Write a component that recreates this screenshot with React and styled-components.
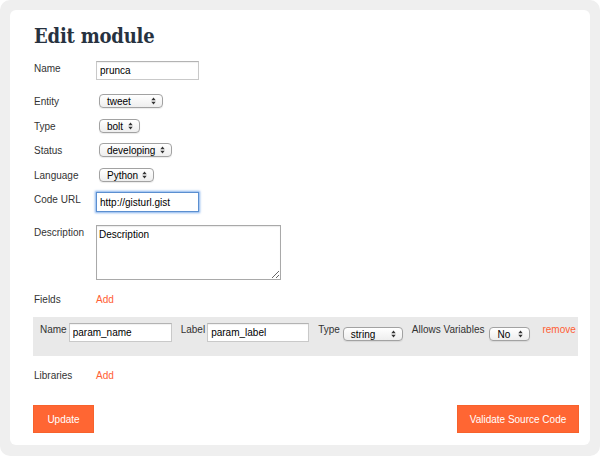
import React from "react";
import styled, { createGlobalStyle } from "styled-components";

const GlobalStyle = createGlobalStyle`
  html, body {
    margin: 0;
    padding: 0;
    background: #ffffff;
  }
  body {
    font-family: "Liberation Sans", Arial, sans-serif;
    font-size: 10px;
    color: #333;
  }
`;

const Frame = styled.div`
  width: 600px;
  height: 456px;
  box-sizing: border-box;
  padding: 10px;
  background: #efefef;
  border-radius: 10px;
`;

const Card = styled.div`
  height: 435px;
  box-sizing: border-box;
  padding: 13px 11px 0 23px;
  background: #fff;
  border-radius: 6px;
  display: flex;
  flex-direction: column;
`;

const Title = styled.h1`
  margin: 0 0 12px 1px;
  font-family: "DejaVu Serif Condensed", "DejaVu Serif", Georgia, serif;
  font-weight: bold;
  font-size: 20px;
  line-height: 26px;
  letter-spacing: -0.2px;
  color: #27323f;
`;

const Row = styled.div`
  display: flex;
  align-items: flex-start;
  height: ${(p) => p.$h}px;
  flex: none;
`;

const Label = styled.label`
  width: 63px;
  flex: none;
  padding: 1px 0 0 1px;
  box-sizing: border-box;
  line-height: 14px;
  color: #333;
`;

const TextInput = styled.input`
  box-sizing: border-box;
  width: ${(p) => p.$w || 103}px;
  height: ${(p) => (p.$focus ? 20 : 19)}px;
  margin: 0;
  padding: 0 3px;
  font-family: "Liberation Sans", Arial, sans-serif;
  font-size: 10px;
  color: #000;
  background: #fff;
  border: 1px solid ${(p) => (p.$focus ? "#5b8fd0" : "#c9c9c9")};
  border-top-color: ${(p) => (p.$focus ? "#5b8fd0" : "#b3b3b3")};
  box-shadow: ${(p) =>
    p.$focus
      ? "0 0 2px 1px rgba(90, 150, 230, 0.75)"
      : "inset 0 1px 1px rgba(0, 0, 0, 0.06)"};
  outline: none;
  flex: none;
`;

const TextArea = styled.textarea`
  box-sizing: border-box;
  width: 185px;
  height: 55px;
  margin: 0;
  padding: 2px 2px;
  font-family: "Liberation Sans", Arial, sans-serif;
  font-size: 10px;
  line-height: 13px;
  color: #000;
  border: 1px solid #a9a9a9;
  box-shadow: inset 0 1px 1px rgba(0, 0, 0, 0.08);
  outline: none;
`;

const Select = styled.div`
  box-sizing: border-box;
  width: ${(p) => p.$w}px;
  height: 14px;
  margin: ${(p) => p.$mt || 0}px 0 0 ${(p) => p.$ml || 0}px;
  padding: 0 6px 0 7px;
  flex: none;
  display: flex;
  align-items: center;
  justify-content: space-between;
  border: 1px solid #a2a2a2;
  border-radius: 4px;
  background: linear-gradient(#ffffff, #eeeeee);
  box-shadow: 0 1px 1px rgba(0, 0, 0, 0.08);
  font-size: 10px;
  line-height: 12px;
  color: #000;
  white-space: nowrap;
`;

const SelectText = styled.span`
  padding-top: 1px;
`;

const Arrows = () => (
  <svg width="5" height="8" viewBox="0 0 5 8">
    <path d="M0.3 3.2 L2.5 0.6 L4.7 3.2 Z M0.3 4.8 L2.5 7.4 L4.7 4.8 Z" fill="#333" />
  </svg>
);

const Dropdown = ({ value, ...rest }) => (
  <Select {...rest}>
    <SelectText>{value}</SelectText>
    <Arrows />
  </Select>
);

const OrangeLink = styled.a`
  padding-top: 1px;
  color: #ff5e34;
  line-height: 14px;
  text-decoration: none;
  white-space: nowrap;
  cursor: pointer;
`;

const Band = styled.div`
  flex: none;
  height: 39px;
  margin: 0 1px 12px 0;
  padding: 6px 0 0 7px;
  box-sizing: border-box;
  background: #e9e9e9;
  display: flex;
  align-items: flex-start;
  gap: 9px;
`;

const Group = styled.div`
  display: flex;
  align-items: flex-start;
  flex: none;
  gap: ${(p) => p.$gap || 2}px;
`;

const BandLabel = styled.span`
  line-height: 14px;
  white-space: nowrap;
  color: #333;
`;

const RemoveLink = styled(OrangeLink)`
  margin-left: 3px;
  padding-top: 0;
`;

const Actions = styled.div`
  display: flex;
  justify-content: space-between;
`;

const Button = styled.button`
  height: 28px;
  width: ${(p) => p.$w}px;
  padding: 0;
  border: 1px solid #f7622c;
  background: #ff6633;
  color: #fff;
  font-family: "Liberation Sans", Arial, sans-serif;
  font-size: 10px;
  cursor: pointer;
`;

export default function App() {
  return (
    <>
      <GlobalStyle />
      <Frame>
        <Card>
          <Title>Edit module</Title>

          <Row $h={33}>
            <Label>Name</Label>
            <TextInput defaultValue="prunca" />
          </Row>
          <Row $h={25}>
            <Label>Entity</Label>
            <Dropdown value="tweet" $w={64} $ml={3} />
          </Row>
          <Row $h={24}>
            <Label>Type</Label>
            <Dropdown value="bolt" $w={41} $ml={3} />
          </Row>
          <Row $h={25}>
            <Label>Status</Label>
            <Dropdown value="developing" $w={73} $ml={3} />
          </Row>
          <Row $h={24}>
            <Label>Language</Label>
            <Dropdown value="Python" $w={55} $ml={3} />
          </Row>
          <Row $h={33}>
            <Label>Code URL</Label>
            <TextInput defaultValue="http://gisturl.gist" $focus />
          </Row>
          <Row $h={67}>
            <Label>Description</Label>
            <TextArea defaultValue="Description" />
          </Row>
          <Row $h={25}>
            <Label>Fields</Label>
            <OrangeLink>Add</OrangeLink>
          </Row>

          <Band>
            <Group>
              <BandLabel>Name</BandLabel>
              <TextInput defaultValue="param_name" $w={103} />
            </Group>
            <Group>
              <BandLabel>Label</BandLabel>
              <TextInput defaultValue="param_label" $w={102} />
            </Group>
            <Group $gap={3}>
              <BandLabel>Type</BandLabel>
              <Dropdown value="string" $w={60} $mt={4} />
            </Group>
            <Group $gap={5}>
              <BandLabel>Allows Variables</BandLabel>
              <Dropdown value="No" $w={41} $mt={4} />
            </Group>
            <RemoveLink>remove</RemoveLink>
          </Band>

          <Row $h={37}>
            <Label>Libraries</Label>
            <OrangeLink>Add</OrangeLink>
          </Row>

          <Actions>
            <Button $w={61}>Update</Button>
            <Button $w={122}>Validate Source Code</Button>
          </Actions>
        </Card>
      </Frame>
    </>
  );
}
